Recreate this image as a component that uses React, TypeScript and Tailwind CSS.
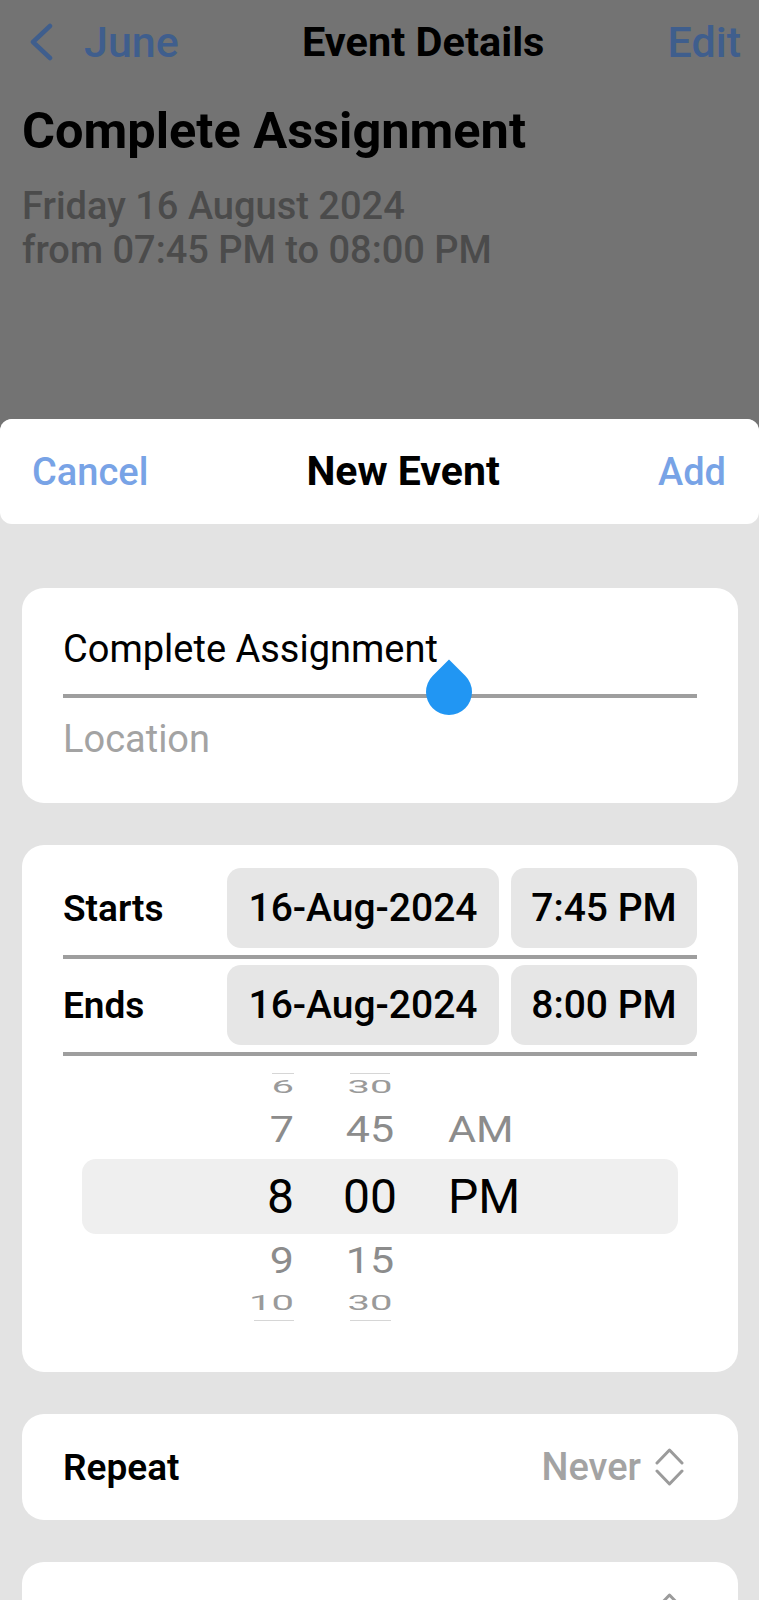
import React from "react";

type WheelRow = { hour: string; min: string; ap: string; row: string; text: string };

// visible rows of the time wheel, outer ones squashed like a drum
const wheel: WheelRow[] = [
  { hour: "6", min: "30", ap: "", row: "h-[26px]", text: "text-[40px] scale-y-[0.46] text-[#9a9a9a]" },
  { hour: "7", min: "45", ap: "AM", row: "h-[59px]", text: "text-[43px] scale-y-[0.88] text-[#8c8c8c]" },
  { hour: "8", min: "00", ap: "PM", row: "h-[75px] rounded-[14px] bg-[#efefef]", text: "text-[48px] text-black" },
  { hour: "9", min: "15", ap: "", row: "h-[52px]", text: "text-[43px] scale-y-[0.88] text-[#8c8c8c]" },
  { hour: "10", min: "30", ap: "", row: "h-[34px]", text: "text-[40px] scale-y-[0.5] text-[#9a9a9a]" },
];

function UpDown() {
  return (
    <svg width="31" height="38" viewBox="0 0 31 38" fill="none" stroke="#9b9b9b" strokeWidth="3" strokeLinecap="round" strokeLinejoin="round">
      <path d="M3 15 L15.5 2 L28 15" />
      <path d="M3 23 L15.5 36 L28 23" />
    </svg>
  );
}

// edge of a wheel row that has rolled out of view
function WheelEdge({ hourW, minW }: { hourW: string; minW: string }) {
  return (
    <div className="flex h-px">
      <span className="flex w-[212px] justify-end">
        <span className={`h-px bg-[#d6d6d6] ${hourW}`} />
      </span>
      <span className="flex w-[152px] justify-center">
        <span className={`h-px bg-[#d6d6d6] ${minW}`} />
      </span>
    </div>
  );
}

function DateRow({ label, date, time }: { label: string; date: string; time: string }) {
  return (
    <div className="flex h-[80px] items-center">
      <div className="w-[164px] text-[37px] font-semibold leading-none text-black">{label}</div>
      <div className="flex h-full w-[272px] items-center justify-center rounded-[14px] bg-[#e6e6e6] text-[39px] font-medium leading-none text-black">
        {date}
      </div>
      <div className="ml-[12px] flex h-full flex-1 items-center justify-center rounded-[14px] bg-[#e6e6e6] text-[39px] font-medium leading-none text-black">
        {time}
      </div>
    </div>
  );
}

export default function App() {
  return (
    <div className="min-h-screen w-full bg-[#737373] font-[family-name:Roboto,sans-serif]">
      {/* dimmed event details page behind the sheet */}
      <div className="h-[419px]">
        <div className="flex h-[84px] items-center justify-between pl-[29px] pr-[18px] leading-none">
          <div className="flex items-center gap-[31px] text-[43px] font-medium text-[#3f5e8d]">
            <svg width="24" height="38" viewBox="0 0 24 38" fill="none" stroke="#3f5e8d" strokeWidth="4.5" strokeLinecap="round" strokeLinejoin="round">
              <path d="M21 3 L4 19 L21 35" />
            </svg>
            <span>June</span>
          </div>
          <span className="text-[41.5px] font-bold text-black">Event Details</span>
          <span className="text-[43px] font-medium text-[#3f5e8d]">Edit</span>
        </div>
        <div className="px-[22px]">
          <h1 className="mt-[22px] text-[50.5px] font-bold leading-none text-black">Complete Assignment</h1>
          <div className="mt-[27px] text-[38px] font-medium leading-[44px] text-[#4b4b4b]">
            <div>Friday 16 August 2024</div>
            <div>from 07:45 PM to 08:00 PM</div>
          </div>
        </div>
      </div>

      {/* New Event sheet */}
      <div className="rounded-t-[12px] bg-[#e3e3e3] pb-10">
        <div className="flex h-[105px] items-center justify-between rounded-[12px] bg-white pl-[32px] pr-[33px] leading-none">
          <span className="text-[38px] font-medium text-[#78a3e6]">Cancel</span>
          <span className="text-[41px] font-bold text-black">New Event</span>
          <span className="text-[38px] font-medium text-[#78a3e6]">Add</span>
        </div>

        <div className="flex flex-col gap-[42px] pl-[22px] pr-[21px] pt-[64px]">
          <div className="rounded-[22px] bg-white px-[41px] pb-[41px] pt-[38px]">
            <div className="text-[38px] leading-[46px] text-black">Complete Assignment</div>
            <div className="relative mt-[22px] h-[4px] bg-[#9e9e9e]">
              <svg className="absolute left-[363px] top-[-35px]" width="46" height="57" viewBox="0 0 46 57">
                <path d="M23 0.5 L39.26 16.74 A23 23 0 1 1 6.74 16.74 Z" fill="#2196f3" />
              </svg>
            </div>
            <div className="mt-[18px] text-[38px] leading-[46px] text-[#a3a3a3]">Location</div>
          </div>

          <div className="rounded-[22px] bg-white px-[41px] pb-[51px] pt-[23px]">
            <DateRow label="Starts" date="16-Aug-2024" time="7:45 PM" />
            <div className="mt-[7px] h-[4px] bg-[#9e9e9e]" />
            <div className="mt-[6px]">
              <DateRow label="Ends" date="16-Aug-2024" time="8:00 PM" />
            </div>
            <div className="mt-[7px] h-[4px] bg-[#9e9e9e]" />

            <div className="mx-[19px] mt-[17px]">
              <WheelEdge hourW="w-[22px]" minW="w-[40px]" />
              {wheel.map((r) => (
                <div key={r.hour} className={`flex items-center ${r.row}`}>
                  <div className={`flex w-full items-center leading-none ${r.text}`}>
                    <span className="w-[212px] text-right">{r.hour}</span>
                    <span className="w-[152px] text-center">{r.min}</span>
                    <span className="ml-[2px]">{r.ap}</span>
                  </div>
                </div>
              ))}
              <WheelEdge hourW="w-[40px]" minW="w-[41px]" />
            </div>
          </div>

          <div className="flex h-[106px] items-center justify-between rounded-[22px] bg-white pl-[41px] pr-[53px]">
            <span className="text-[37px] font-semibold leading-none text-black">Repeat</span>
            <div className="flex items-center gap-[13px]">
              <span className="text-[38px] font-medium leading-none text-[#a3a3a3]">Never</span>
              <UpDown />
            </div>
          </div>

          {/* next row, only its top edge and chevrons are on screen */}
          <div className="flex h-[106px] items-start justify-end rounded-[22px] bg-white pr-[53px] pt-[31px]">
            <UpDown />
          </div>
        </div>
      </div>
    </div>
  );
}
